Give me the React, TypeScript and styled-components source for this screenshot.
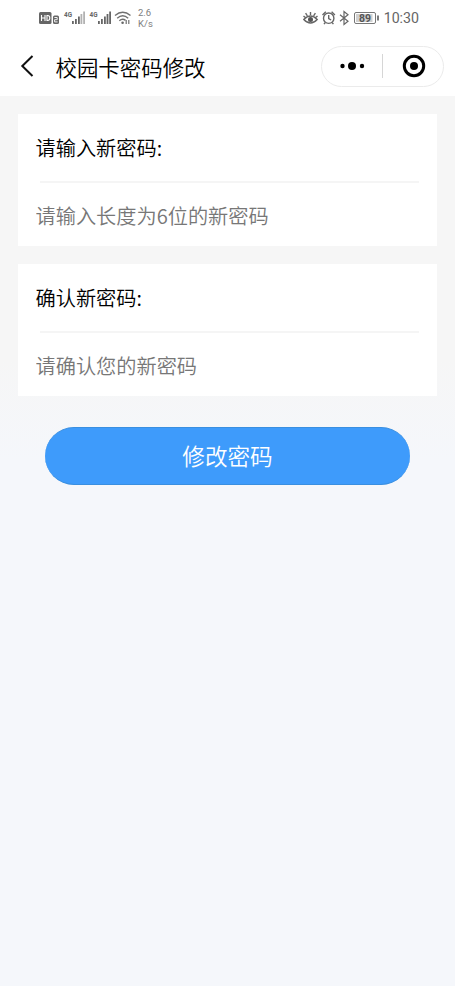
import React from "react";
import styled, { createGlobalStyle } from "styled-components";

const GlobalStyle = createGlobalStyle`
  * { box-sizing: border-box; }
  body { margin: 0; background: #f5f7fb; }
`;

const Screen = styled.div`
  display: flex;
  flex-direction: column;
  width: 455px;
  height: 986px;
  overflow: hidden;
  background: linear-gradient(#f6f6f6 360px, #f5f7fb 460px);
  font-family: "Noto Sans CJK SC", sans-serif;
  font-weight: 350;
`;

const StatusBar = styled.div`
  display: flex;
  justify-content: space-between;
  height: 36px;
  padding: 0 36px 0 38px;
  background: #fff;
  font-family: Roboto, sans-serif;
  font-weight: 400;
  color: #666;
`;

const StatusGroup = styled.div`
  display: flex;
  align-items: center;
  height: 36px;
`;

const Speed = styled.div`
  width: 18px;
  margin-left: 6px;
  font-size: 9.5px;
  line-height: 11px;
  color: #808080;
`;

const Clock = styled.span`
  margin-left: 4px;
  font-size: 14.2px;
  line-height: 36px;
  color: #666;
`;

const NavBar = styled.header`
  display: flex;
  align-items: center;
  height: 60px;
  padding: 0 11px 0 20px;
  background: #fff;
`;

const BackButton = styled.button`
  display: flex;
  width: 16px;
  padding: 0;
  border: 0;
  background: none;
`;

const Title = styled.h1`
  flex: 1;
  margin: 0 0 0 19.5px;
  padding-top: 1px;
  font-size: 21.45px;
  font-weight: inherit;
  line-height: 30px;
  color: #000;
`;

const Capsule = styled.div`
  display: flex;
  align-items: center;
  width: 123px;
  height: 41px;
  border: 1px solid #ebebeb;
  border-radius: 21px;
`;

const CapsuleHalf = styled.div`
  display: flex;
  flex: 1;
  align-items: center;
  justify-content: center;
  padding-left: 1.5px;
`;

const CapsuleDivider = styled.i`
  width: 1px;
  height: 24px;
  background: #d6d6d6;
`;

const Form = styled.main`
  display: flex;
  flex-direction: column;
  gap: 18px;
  padding: 18.4px 18px 0;
`;

const Card = styled.section`
  height: 132px;
  background: #fff;
`;

const Label = styled.label`
  display: block;
  height: 67px;
  padding-left: 17.5px;
  font-size: 20.2px;
  line-height: 68px;
  color: #000;
`;

const Rule = styled.div`
  height: 2px;
  margin: 0 18px 0 22px;
  background: #f5f5f5;
`;

const Field = styled.input`
  display: block;
  width: 100%;
  height: 63px;
  padding: 1px 17.5px 0;
  border: 0;
  outline: 0;
  background: none;
  font-family: inherit;
  font-size: 20.2px;
  font-weight: inherit;
  &::placeholder { color: #777; opacity: 1; }
`;

const Submit = styled.button`
  width: 365px;
  height: 58px;
  margin: 12.6px 0 0 27px;
  padding: 0;
  border: solid #3a8fe0;
  border-width: 1px 0;
  border-radius: 29px;
  background: #3e9bfb;
  font-family: inherit;
  font-size: 22.6px;
  font-weight: inherit;
  color: #fff;
`;

const NetworkIcons = () => (
  <svg width="94" height="20" viewBox="38 8 94 20" fill="#666">
    <rect x="39" y="12" width="12.5" height="12" rx="1.5" />
    <path d="M41.5 15v6M45 15v6M41.5 18H45M47 15.5v5h.7c2.8 0 2.8-5 0-5z" stroke="#fff" strokeWidth="1.1" fill="none" />
    <rect x="53" y="15.5" width="6" height="8.5" rx="1.5" />
    <path d="M54.4 17.5h2.8v2.2h-2.6v2.2h3" stroke="#fff" strokeWidth=".9" fill="none" />
    <text x="64" y="17.4" fontSize="7" fontWeight="700" textLength="8" lengthAdjust="spacingAndGlyphs">4G</text>
    <text x="89.5" y="17.4" fontSize="7" fontWeight="700" textLength="8" lengthAdjust="spacingAndGlyphs">4G</text>
    <path d="M72 21h1.8v3H72zM75 19h1.8v5H75zM78 16.5h1.8V24H78z" />
    <path d="M80.5 14h1.8v10h-1.8zM83.2 11.5H85V24h-1.8z" opacity=".5" />
    <path d="M98 21h1.8v3H98zM101 19h1.8v5H101zM104 16.5h1.8V24H104zM106.6 14h1.8v10h-1.8zM109.2 11.5h1.8V24h-1.8z" />
    <g fill="none" stroke="#707070" strokeWidth="1.4">
      <path d="M115 15.5Q122.7 9 130.5 15.5M117.2 18.2Q122.7 13.5 128.2 18.2M119.3 20.7Q122.6 18 125.5 20.4" />
    </g>
    <circle cx="122.6" cy="22.7" r="1.3" />
    <path d="M126.2 20v4M128.8 20v4" stroke="#707070" strokeWidth="1.2" />
  </svg>
);

const DeviceIcons = () => (
  <svg width="77" height="20" viewBox="303 8 77 20" fill="none" stroke="#666" strokeWidth="1.4">
    <path d="M303.8 19.5Q310.5 12.5 317.2 19.5Q310.5 26.5 303.8 19.5ZM310.5 12v3M305.6 13.2l1.8 2.7M315.4 13.2l-1.8 2.7M303.5 16l1.8 1.6M317.5 16l-1.8 1.6" />
    <circle cx="310.5" cy="19.4" r="2.5" fill="#555" stroke="none" />
    <circle cx="328.7" cy="18.2" r="5.2" />
    <path d="M328.7 15v3.5l2.4 1.5M322.5 15l3.3-3.2M334.9 15l-3.3-3.2M325.3 22.5l-1.3 1.6M332.1 22.5l1.3 1.6" />
    <path d="M340 14.8l8 6.4-4 3.3V11.5l4 3.3-8 6.4" strokeWidth="1.2" />
    <rect x="354.5" y="12.5" width="21" height="11" rx="1.5" strokeWidth="1" stroke="#777" fill="#fff" />
    <rect x="356" y="14" width="16.5" height="8" fill="#d0d0d0" stroke="none" />
    <path d="M378 15.5v5" strokeWidth="1.7" />
    <text x="359" y="21.5" fontSize="10" fontWeight="700" fill="#555" stroke="none" textLength="12" lengthAdjust="spacingAndGlyphs">89</text>
  </svg>
);

export default function App() {
  return (
    <>
      <GlobalStyle />
      <Screen>
        <StatusBar>
          <StatusGroup>
            <NetworkIcons />
            <Speed>2.6<br />K/s</Speed>
          </StatusGroup>
          <StatusGroup>
            <DeviceIcons />
            <Clock>10:30</Clock>
          </StatusGroup>
        </StatusBar>
        <NavBar>
          <BackButton aria-label="返回">
            <svg width="16" height="24" viewBox="0 0 16 24" fill="none" stroke="#111" strokeWidth="2">
              <path d="M12.5 2L2.3 12l10.2 10" />
            </svg>
          </BackButton>
          <Title>校园卡密码修改</Title>
          <Capsule>
            <CapsuleHalf>
              <svg width="26" height="10" viewBox="0 0 26 10">
                <circle cx="2.5" cy="5" r="2.2" />
                <circle cx="12" cy="5" r="4" />
                <circle cx="22" cy="5" r="2.2" />
              </svg>
            </CapsuleHalf>
            <CapsuleDivider />
            <CapsuleHalf>
              <svg width="24" height="24" viewBox="0 0 24 24">
                <circle cx="12" cy="12" r="9.7" fill="none" stroke="#000" strokeWidth="3" />
                <circle cx="12" cy="12" r="4" />
              </svg>
            </CapsuleHalf>
          </Capsule>
        </NavBar>
        <Form>
          <Card>
            <Label htmlFor="new-password">请输入新密码:</Label>
            <Rule />
            <Field id="new-password" type="password" placeholder="请输入长度为6位的新密码" />
          </Card>
          <Card>
            <Label htmlFor="confirm-password">确认新密码:</Label>
            <Rule />
            <Field id="confirm-password" type="password" placeholder="请确认您的新密码" />
          </Card>
          <Submit>修改密码</Submit>
        </Form>
      </Screen>
    </>
  );
}
